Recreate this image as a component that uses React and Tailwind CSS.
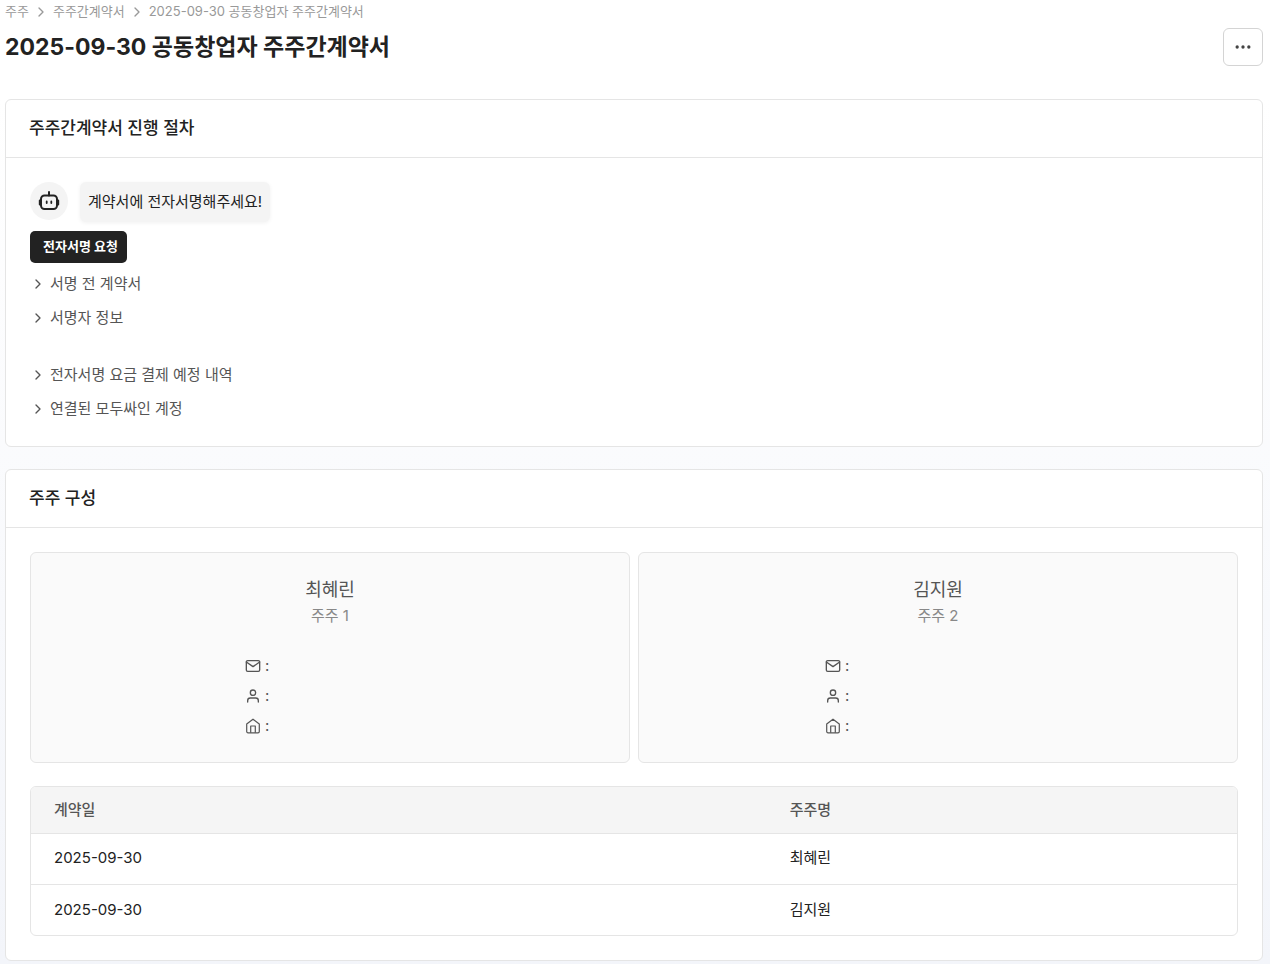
import React from "react";
import { FiChevronRight, FiMail, FiMoreHorizontal, FiUser } from "react-icons/fi";

const shareholders = [
  { name: "최혜린", order: "1", contactWidth: "w-[170px]" },
  { name: "김지원", order: "2", contactWidth: "w-[226px]" },
];

const contracts = [
  { date: "2025-09-30", name: "최혜린" },
  { date: "2025-09-30", name: "김지원" },
];

function BotIcon() {
  return (
    <svg
      className="size-6"
      viewBox="0 0 24 24"
      fill="none"
      stroke="currentColor"
      strokeWidth="2"
      strokeLinecap="round"
      strokeLinejoin="round"
      aria-hidden="true"
    >
      <path d="M12 3v3.500" />
      <rect x="4" y="6.500" width="16" height="13.500" rx="3.500" />
      <path d="M2.800 11.500v4M21.200 11.500v4" />
      <path d="M9.700 12.500v1.500M14.300 12.500v1.500" strokeWidth="1.800" />
    </svg>
  );
}

function HomeIcon() {
  return (
    <svg
      className="size-4"
      viewBox="0 0 16 16"
      fill="none"
      stroke="currentColor"
      strokeWidth="1.200"
      strokeLinejoin="round"
      aria-hidden="true"
    >
      <path d="M8 1.200 1.700 6v7.500a1.300 1.300 0 0 0 1.300 1.300h10a1.300 1.300 0 0 0 1.300-1.300V6Z" />
      <path d="M5.700 14.800V8h4.600v6.800" />
    </svg>
  );
}

function Card({ id, title, children }) {
  return (
    <section
      className="bg-white border border-[#e5e5e5] rounded-md"
      aria-labelledby={id}
    >
      <h2
        id={id}
        className="h-[58px] px-[23px] flex items-center border-b border-[#e5e5e5] text-[17px] font-medium text-[#222]"
      >
        {title}
      </h2>
      <div className="p-6">{children}</div>
    </section>
  );
}

function Toggle({ children }) {
  return (
    <li>
      <button
        type="button"
        aria-expanded="false"
        className="h-[26px] flex items-center gap-1 text-[15px] text-[#555]"
      >
        <FiChevronRight className="size-4" aria-hidden="true" />
        {children}
      </button>
    </li>
  );
}

function App() {
  return (
    <main className="min-h-screen pl-[5px] pr-[7px] pb-[5px] bg-linear-to-b from-white from-10% to-[#f3f5fa] font-[Inter,'Noto_Sans_CJK_KR',sans-serif] text-[15px] text-[#222]">
      <nav aria-label="breadcrumb">
        <ol className="h-6 flex items-center gap-1 text-[13px] text-[#999]">
          <li>
            <a href="#shareholders">주주</a>
          </li>
          <li aria-hidden="true">
            <FiChevronRight className="size-4" />
          </li>
          <li>
            <a href="#agreements">주주간계약서</a>
          </li>
          <li aria-hidden="true">
            <FiChevronRight className="size-4" />
          </li>
          <li aria-current="page">2025-09-30 공동창업자 주주간계약서</li>
        </ol>
      </nav>

      <header className="mt-1 mb-[33px] flex items-center justify-between">
        <h1 className="text-[23px] leading-8 font-bold">
          2025-09-30 공동창업자 주주간계약서
        </h1>
        <button
          type="button"
          aria-label="더보기"
          className="w-10 h-[38px] flex items-center justify-center bg-white border border-[#d4d4d4] rounded-md text-[#444]"
        >
          <FiMoreHorizontal className="size-5" aria-hidden="true" />
        </button>
      </header>

      <div className="flex flex-col gap-[22px]">
        <Card id="progress" title="주주간계약서 진행 절차">
          <div className="flex items-start gap-3">
            <span className="size-[38px] flex items-center justify-center rounded-full bg-[#f4f4f4]">
              <BotIcon />
            </span>
            <p className="h-10 px-2 flex items-center rounded-md bg-[#f4f4f4] shadow-[0_1px_4px_rgba(0,0,0,0.06)]">
              계약서에 전자서명해주세요!
            </p>
          </div>
          <button
            type="button"
            className="mt-[9px] h-8 pl-[13px] pr-[9px] flex items-center rounded-[5px] bg-[#222] text-[13px] font-bold text-white"
          >
            전자서명 요청
          </button>
          <ul className="mt-2 space-y-2">
            <Toggle>서명 전 계약서</Toggle>
            <Toggle>서명자 정보</Toggle>
          </ul>
          <ul className="mt-[31px] space-y-2">
            <Toggle>전자서명 요금 결제 예정 내역</Toggle>
            <Toggle>연결된 모두싸인 계정</Toggle>
          </ul>
        </Card>

        <Card id="members" title="주주 구성">
          <div className="grid grid-cols-2 gap-2">
            {shareholders.map((holder) => (
              <article
                key={holder.order}
                className="pt-[25px] pb-[21px] flex flex-col items-center bg-[#fafafa] border border-[#e5e5e5] rounded-md"
              >
                <h3 className="text-[18px] leading-6 text-[#555]">
                  {holder.name}
                </h3>
                <p className="leading-7 text-[#888]">주주 {holder.order}</p>
                <ul
                  className={`mt-[21px] leading-[30px] text-[#555] ${holder.contactWidth}`}
                >
                  <li className="flex items-center gap-1">
                    <FiMail className="size-4" aria-label="이메일" /> :
                  </li>
                  <li className="flex items-center gap-1">
                    <FiUser className="size-4" aria-label="이름" /> :
                  </li>
                  <li className="flex items-center gap-1">
                    <HomeIcon /> :
                  </li>
                </ul>
              </article>
            ))}
          </div>

          <div className="mt-[23px] border border-[#e5e5e5] rounded-md overflow-hidden">
            <table className="w-full table-fixed text-left">
              <thead className="bg-[#f5f5f5] text-[#555]">
                <tr className="h-[46px]">
                  <th className="w-[61%] px-[23px] font-medium">계약일</th>
                  <th className="px-[23px] font-medium">주주명</th>
                </tr>
              </thead>
              <tbody>
                {contracts.map((contract) => (
                  <tr
                    key={contract.name}
                    className="h-[51px] border-t border-[#e5e5e5]"
                  >
                    <td className="px-[23px]">{contract.date}</td>
                    <td className="px-[23px]">{contract.name}</td>
                  </tr>
                ))}
              </tbody>
            </table>
          </div>
        </Card>
      </div>
    </main>
  );
}

export default App;
